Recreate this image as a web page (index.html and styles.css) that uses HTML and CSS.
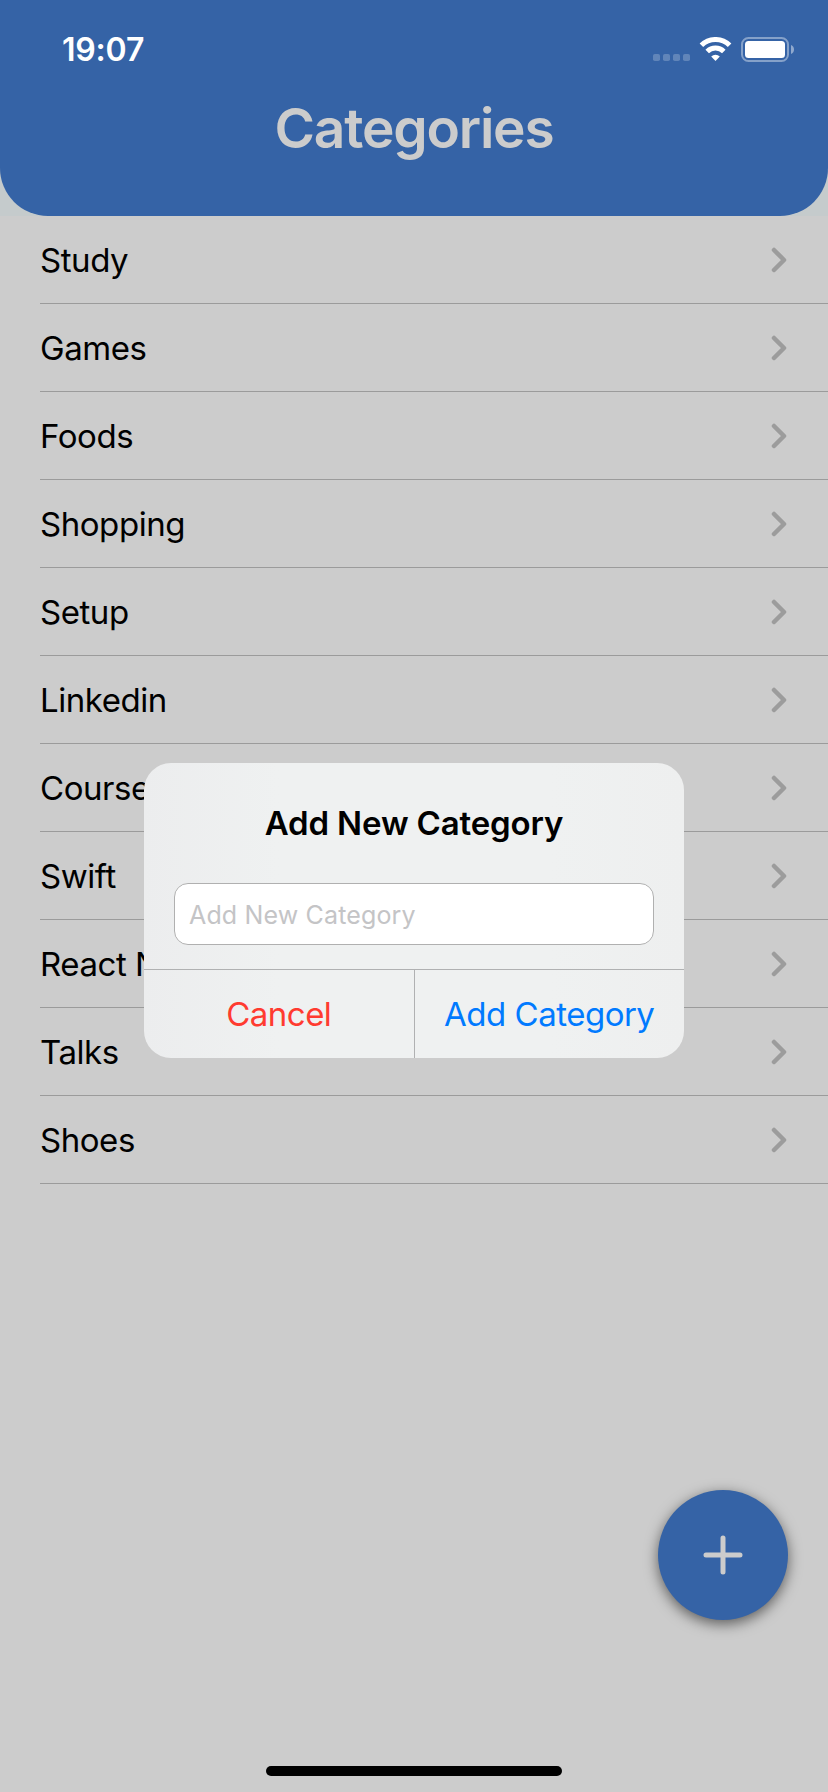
FILE: index.html
```html
<!DOCTYPE html>
<html lang="en">
<head>
<meta charset="utf-8">
<title>Categories</title>
<link rel="stylesheet" href="styles.css">
</head>
<body>
<div class="screen">
  <div class="header-wrap">
    <header class="header">
      <div class="status">
        <span class="time">19:07</span>
        <svg class="status-icons" width="142" height="26" viewBox="0 0 142 26">
          <g fill="#fff" fill-opacity=".22">
            <rect x="0" y="17" width="7" height="7" rx="1.8"/>
            <rect x="10" y="17" width="7" height="7" rx="1.8"/>
            <rect x="20" y="17" width="7" height="7" rx="1.8"/>
            <rect x="30" y="17" width="7" height="7" rx="1.8"/>
          </g>
          <g fill="none" stroke="#fff" stroke-width="5">
            <path d="M48.4 8.3A20 20 0 0 1 76.6 8.3"/>
            <path d="M54.2 14.5A11.8 11.8 0 0 1 70.8 14.5"/>
          </g>
          <path d="M58.2 19.4A6.2 6.2 0 0 1 66.8 19.4L62.5 24Z" fill="#fff"/>
          <rect x="89" y="1" width="46" height="23" rx="6.5" fill="none" stroke="#fff" stroke-opacity=".4" stroke-width="2"/>
          <rect x="92" y="4" width="40" height="17" rx="3.5" fill="#fff"/>
          <path d="M138 8C142 9.5 142 15.500 138 17Z" fill="#fff" fill-opacity=".45"/>
        </svg>
      </div>
      <h1 class="title">Categories</h1>
    </header>
  </div>
  <ul class="list">
    <li class="row"><span>Study</span><svg class="chev" width="16" height="26" viewBox="0 0 16 26"><path d="M3 3L13 13L3 23"/></svg></li>
    <li class="row"><span>Games</span><svg class="chev" width="16" height="26" viewBox="0 0 16 26"><path d="M3 3L13 13L3 23"/></svg></li>
    <li class="row"><span>Foods</span><svg class="chev" width="16" height="26" viewBox="0 0 16 26"><path d="M3 3L13 13L3 23"/></svg></li>
    <li class="row"><span>Shopping</span><svg class="chev" width="16" height="26" viewBox="0 0 16 26"><path d="M3 3L13 13L3 23"/></svg></li>
    <li class="row"><span>Setup</span><svg class="chev" width="16" height="26" viewBox="0 0 16 26"><path d="M3 3L13 13L3 23"/></svg></li>
    <li class="row"><span>Linkedin</span><svg class="chev" width="16" height="26" viewBox="0 0 16 26"><path d="M3 3L13 13L3 23"/></svg></li>
    <li class="row"><span>Course</span><svg class="chev" width="16" height="26" viewBox="0 0 16 26"><path d="M3 3L13 13L3 23"/></svg></li>
    <li class="row"><span>Swift</span><svg class="chev" width="16" height="26" viewBox="0 0 16 26"><path d="M3 3L13 13L3 23"/></svg></li>
    <li class="row"><span>React N</span><svg class="chev" width="16" height="26" viewBox="0 0 16 26"><path d="M3 3L13 13L3 23"/></svg></li>
    <li class="row"><span>Talks</span><svg class="chev" width="16" height="26" viewBox="0 0 16 26"><path d="M3 3L13 13L3 23"/></svg></li>
    <li class="row"><span>Shoes</span><svg class="chev" width="16" height="26" viewBox="0 0 16 26"><path d="M3 3L13 13L3 23"/></svg></li>
  </ul>
  <div class="fab">
    <svg width="40" height="40" viewBox="0 0 40 40"><path d="M20 3V37M3 20H37"/></svg>
  </div>
  <div class="home-bar"></div>
  <div class="dialog">
    <h2 class="dialog-title">Add New Category</h2>
    <div class="field"><span>Add New Category</span></div>
    <div class="actions">
      <div class="action cancel"><span>Cancel</span></div>
      <div class="action add"><span>Add Category</span></div>
    </div>
  </div>
</div>
</body>
</html>
```
FILE: styles.css
```css
* { box-sizing: border-box; }
body { margin: 0; font-family: Inter, "Liberation Sans", sans-serif; }
.screen { position: relative; width: 828px; height: 1792px; background: #ccc; overflow: hidden; }
.header-wrap { background: #c5cbcc; }
.header {
  height: 216px;
  padding-top: 36px;
  background: #3563a6;
  border-radius: 0 0 48px 48px;
}
.status { display: flex; justify-content: space-between; height: 28px; padding: 0 33px 0 62px; }
.time { font-size: 32px; font-weight: 600; line-height: 28px; color: #fff; letter-spacing: -0.2px; }
.status-icons { display: block; margin-top: 1px; }
.title {
  margin: 32px 0 0;
  font-size: 55px;
  font-weight: 600;
  line-height: 64px;
  text-align: center;
  color: #ccc;
  letter-spacing: -1.2px;
}
.list { margin: 0; padding: 0 0 0 40px; list-style: none; }
.row {
  display: flex;
  align-items: center;
  justify-content: space-between;
  height: 88px;
  padding: 0 41px 0 0;
  border-bottom: 1px solid #9b9b9b;
  font-size: 33px;
  color: #000;
  letter-spacing: -0.45px;
}
.chev { fill: none; stroke: #9c9c9c; stroke-width: 4.5; stroke-linecap: round; stroke-linejoin: round; }
.fab {
  position: absolute;
  left: 658px;
  top: 1490px;
  display: grid;
  place-items: center;
  width: 130px;
  height: 130px;
  border-radius: 50%;
  background: #3563a6;
  box-shadow: 0 4px 14px rgba(0, 0, 0, .55);
}
.fab svg { fill: none; stroke: #ccc; stroke-width: 5; stroke-linecap: round; }
.home-bar { position: absolute; left: 266px; top: 1766px; width: 296px; height: 10px; border-radius: 5px; background: #000; }
.dialog {
  position: absolute;
  left: 144px;
  top: 763px;
  display: flex;
  flex-direction: column;
  width: 540px;
  height: 295px;
  border-radius: 27px;
  background: linear-gradient(90deg, #ecedee, #eff1f1 25%, #eff1f1 75%, #eeefef);
  overflow: hidden;
}
.dialog-title {
  margin: 38px 0 0;
  font-size: 33px;
  font-weight: 600;
  line-height: 44px;
  text-align: center;
  letter-spacing: -0.15px;
}
.field {
  display: flex;
  align-items: center;
  height: 62px;
  margin: 38px 30px 0;
  padding: 1px 15px 0 14px;
  border: 1px solid #b0b0b0;
  border-radius: 14px;
  background: #fff;
  font-size: 25px;
  letter-spacing: 0.15px;
  color: #c4c4c6;
}
.actions { display: flex; height: 89px; margin-top: auto; border-top: 1px solid #b0b1b2; }
.action { display: flex; flex: 1; align-items: center; justify-content: center; font-size: 33px; letter-spacing: -0.5px; }
.cancel { color: #ff3b30; }
.add { border-left: 1px solid #b0b1b2; color: #007aff; }
```
